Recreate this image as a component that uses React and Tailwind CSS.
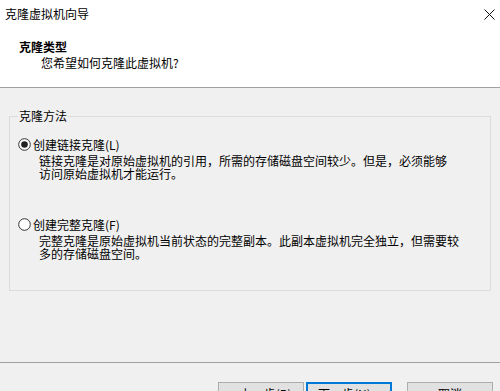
function Radio({ checked }) {
  return (
    <svg width="13" height="13" viewBox="0 0 13 13" className="shrink-0">
      <circle cx="6.5" cy="6.5" r="5.8" fill="#fff" stroke="#333" strokeWidth="1" />
      {checked && <circle cx="6.5" cy="6.5" r="3.3" fill="#222" />}
    </svg>
  );
}

function Option({ checked, label, hotkey, lines }) {
  return (
    <div>
      <div className="flex items-center h-[13px]">
        <Radio checked={checked} />
        <span className="ml-[2px] leading-[13px]">
          {label}({hotkey})
        </span>
      </div>
      <div className="pl-[21px] mt-[3px] leading-[13px]">
        {lines.map((l, i) => (
          <div key={i}>{l}</div>
        ))}
      </div>
    </div>
  );
}

export default function App() {
  return (
    <div className="w-[500px] h-[391px] overflow-hidden bg-[#f0f0f0] text-[12px] text-black font-['Microsoft_YaHei_UI','Noto_Sans_CJK_SC',sans-serif]">
      {/* title bar */}
      <div className="h-[29px] bg-white flex items-start justify-between pl-[5px] pr-[5px] pt-[7px]">
        <span className="leading-[14px]">克隆虚拟机向导</span>
        <svg width="11" height="11" viewBox="0 0 11 11" className="mt-[2px]">
          <path d="M0.5 0.5 L10.5 10.5 M10.5 0.5 L0.5 10.5" stroke="#111" strokeWidth="1" />
        </svg>
      </div>

      {/* wizard header */}
      <div className="h-[59px] bg-white border-b border-[#a0a0a0] pl-[19px] pt-[11px]">
        <div className="font-bold leading-[14px]">克隆类型</div>
        <div className="pl-[22px] mt-[2px] leading-[14px]">您希望如何克隆此虚拟机?</div>
      </div>

      {/* group box */}
      <div className="relative mx-[9px] mt-[28px] h-[175px] border border-[#dcdcdc]">
        <span className="absolute -top-[8px] left-[8px] bg-[#f0f0f0] px-[1px] leading-[14px]">
          克隆方法
        </span>
        <div className="pl-[8px] pt-[21px]">
          <Option
            checked
            label="创建链接克隆"
            hotkey="L"
            lines={[
              '链接克隆是对原始虚拟机的引用，所需的存储磁盘空间较少。但是，必须能够',
              '访问原始虚拟机才能运行。',
            ]}
          />
          <div className="mt-[38px]">
            <Option
              label="创建完整克隆"
              hotkey="F"
              lines={[
                '完整克隆是原始虚拟机当前状态的完整副本。此副本虚拟机完全独立，但需要较',
                '多的存储磁盘空间。',
              ]}
            />
          </div>
        </div>
      </div>

      {/* separator */}
      <div className="mt-[71px] border-t border-[#a0a0a0]" />

      {/* buttons */}
      <div className="flex justify-end pr-[7px] mt-[19px]">
        <button className="w-[86px] h-[23px] bg-[#e1e1e1] border border-[#adadad] leading-[14px]">
          &lt; 上一步(B)
        </button>
        <button className="ml-[2px] w-[86px] h-[23px] bg-[#e1e1e1] border-2 border-[#0078d7] leading-[14px]">
          下一步(N) &gt;
        </button>
        <button className="ml-[15px] w-[86px] h-[23px] bg-[#e1e1e1] border border-[#adadad] leading-[14px]">
          取消
        </button>
      </div>
    </div>
  );
}
